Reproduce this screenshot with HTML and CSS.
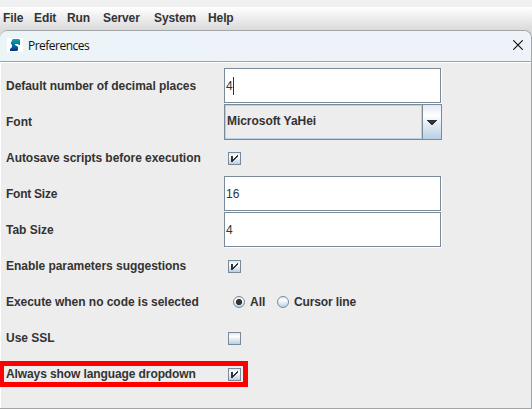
FILE: index.html
```
<!DOCTYPE html>
<html lang="en">
<head>
<meta charset="utf-8">
<title>Preferences</title>
<link rel="stylesheet" href="styles.css">
</head>
<body>
<nav class="menubar">
  <span>File</span><span>Edit</span><span>Run</span><span>Server</span><span>System</span><span>Help</span>
</nav>
<section class="dialog">
  <header class="titlebar">
    <svg class="logo" width="16" height="14" viewBox="0 0 16 14">
      <defs><linearGradient id="lg" x1="0" y1="0" x2="0" y2="1"><stop offset="0" stop-color="#09a5ae"/><stop offset=".55" stop-color="#086b9b"/><stop offset="1" stop-color="#092f7e"/></linearGradient></defs>
      <rect width="16" height="14" fill="#fff"/>
      <path fill="url(#lg)" d="M6 1H12L13 2V7H12L11 6H8V7L10 8L11 9V12L10 13H3V11L5 9V7L4 6V4L5 3V2Z"/>
    </svg>
    <h1 class="title">Preferences</h1>
    <svg class="close" width="10" height="10" viewBox="0 0 10 10"><path d="M.3.3 9.7 9.7M9.7.3.3 9.7" stroke="#111" stroke-width="1.15" fill="none"/></svg>
  </header>
  <main class="form">
    <div class="row"><label class="snug">Default number of decimal places</label><div class="field">4<i class="caret"></i></div></div>
    <div class="row"><label>Font</label><div class="combo"><span class="value">Microsoft YaHei</span><span class="arrow"><svg width="10" height="5" viewBox="0 0 10 5" shape-rendering="crispEdges"><path d="M0 0H10V1H9V2H8V3H7V4H6V5H4V4H3V3H2V2H1V1H0Z" fill="#333"/></svg></span></div></div>
    <div class="row"><label class="snug">Autosave scripts before execution</label><span class="check"><svg width="7" height="7" viewBox="0 0 7 7" shape-rendering="crispEdges"><path d="M0 1H2V4H3V3H4V2H5V1H6V0H7V2H6V3H5V4H4V5H3V6H2V7H0Z" fill="#333"/></svg></span></div>
    <div class="row"><label class="tight">Font Size</label><div class="field">16</div></div>
    <div class="row"><label>Tab Size</label><div class="field">4</div></div>
    <div class="row"><label class="snug">Enable parameters suggestions</label><span class="check"><svg width="7" height="7" viewBox="0 0 7 7" shape-rendering="crispEdges"><path d="M0 1H2V4H3V3H4V2H5V1H6V0H7V2H6V3H5V4H4V5H3V6H2V7H0Z" fill="#333"/></svg></span></div>
    <div class="row"><label class="snug">Execute when no code is selected</label><span class="radio on"></span><span class="r-all">All</span><span class="radio"></span><span class="r-cursor">Cursor line</span></div>
    <div class="row"><label>Use SSL</label><span class="check"></span></div>
    <div class="row"><label class="close-set">Always show language dropdown</label><span class="check"><svg width="7" height="7" viewBox="0 0 7 7" shape-rendering="crispEdges"><path d="M0 1H2V4H3V3H4V2H5V1H6V0H7V2H6V3H5V4H4V5H3V6H2V7H0Z" fill="#333"/></svg></span><i class="highlight"></i></div>
  </main>
</section>
</body>
</html>
```
FILE: styles.css
```
* { box-sizing: border-box; }
body {
  margin: 0;
  width: 532px;
  height: 410px;
  overflow: hidden;
  background: #fff;
  color: #333;
  font: bold 12px/14px "Liberation Sans", Arial, sans-serif;
}
.menubar {
  display: grid;
  grid-template-columns: 31px 33px 36px 51px 54px 60px;
  height: 38px;
  padding: 4px 0 0 3px;
  border-top: 7px solid #f0f0f0;
  background: linear-gradient(#fff, #dadada 23px);
  letter-spacing: -0.1px;
  white-space: nowrap;
}
.dialog {
  position: relative;
  height: 379px;
  margin-top: -8px;
  border: solid #a3a6a8;
  border-width: 1px 1px 1px 0;
  border-radius: 8px 8px 0 0;
  background: #ededed;
  overflow: hidden;
}
.titlebar {
  display: flex;
  align-items: center;
  height: 31px;
  padding: 0 8px 0 7px;
  border-bottom: 1px solid #a0a3a6;
  background: linear-gradient(90deg, #ebf4f7, #eef3fa 60%);
}
.logo { margin-top: -2px; }
.title {
  flex: 1;
  margin: 0 0 0 5px;
  color: #111;
  font: 12px/16px "Open Sans", "Noto Sans", sans-serif;
  letter-spacing: -0.52px;
}
.close { margin-top: -2px; }
.form {
  height: 346px;
  padding-top: 6px;
  border-left: 1px solid #fff;
  box-shadow: inset 0 1px #fff;
}
.row {
  position: relative;
  display: flex;
  align-items: center;
  height: 36px;
  padding-left: 5px;
  white-space: nowrap;
}
.row label { width: 218px; flex: none; margin-top: -1px; }
.row .snug { letter-spacing: -0.04px; }
.row .close-set { letter-spacing: -0.1px; }
.row .tight { letter-spacing: -0.25px; }
.field, .combo { width: 217px; height: 35px; margin-top: -1px; border: 1px solid #7a8a99; }
.field {
  display: flex;
  align-items: center;
  padding-left: 1px;
  background: #fff;
  box-shadow: 1px 1px #fff;
  font-weight: normal;
}
.caret { width: 1px; height: 18px; background: #333; }
.combo { display: flex; width: 218px; height: 36px; margin-top: 0; }
.value {
  flex: 1;
  padding: 8px 0 0 1px;
  border: 1px solid #b8cfe5;
  letter-spacing: -0.05px;
}
.arrow {
  display: flex;
  align-items: center;
  justify-content: center;
  width: 19px;
  border-left: 1px solid #7a8a99;
  background: linear-gradient(#dfe9f3, #fff 30%, #b8cfe5);
}
.check {
  display: flex;
  align-items: center;
  justify-content: center;
  width: 13px;
  height: 13px;
  margin: 1px 0 0 4px;
  border: 1px solid #7a8a99;
  background: linear-gradient(#dde8f3, #fff 30%, #b8cfe5);
}
.check svg { margin: 0 1px 1px 0; }
.radio {
  width: 12px;
  height: 12px;
  margin-left: 9px;
  border: 1px solid #7a8a99;
  border-radius: 50%;
  background: linear-gradient(#dde8f3, #fff 30%, #b8cfe5);
}
.radio.on {
  background: radial-gradient(circle, #333 2.8px, transparent 3.3px), linear-gradient(#dde8f3, #fff 30%, #b8cfe5);
}
.r-all { width: 18px; margin: -1px 0 0 5px; }
.r-all + .radio { margin-left: 9px; }
.r-cursor { margin: -1px 0 0 5px; letter-spacing: -0.12px; }
.highlight {
  position: absolute;
  left: -1px;
  top: 5px;
  width: 248px;
  height: 26px;
  border: solid #f00;
  border-width: 5px 5px 5px 4px;
}
```
